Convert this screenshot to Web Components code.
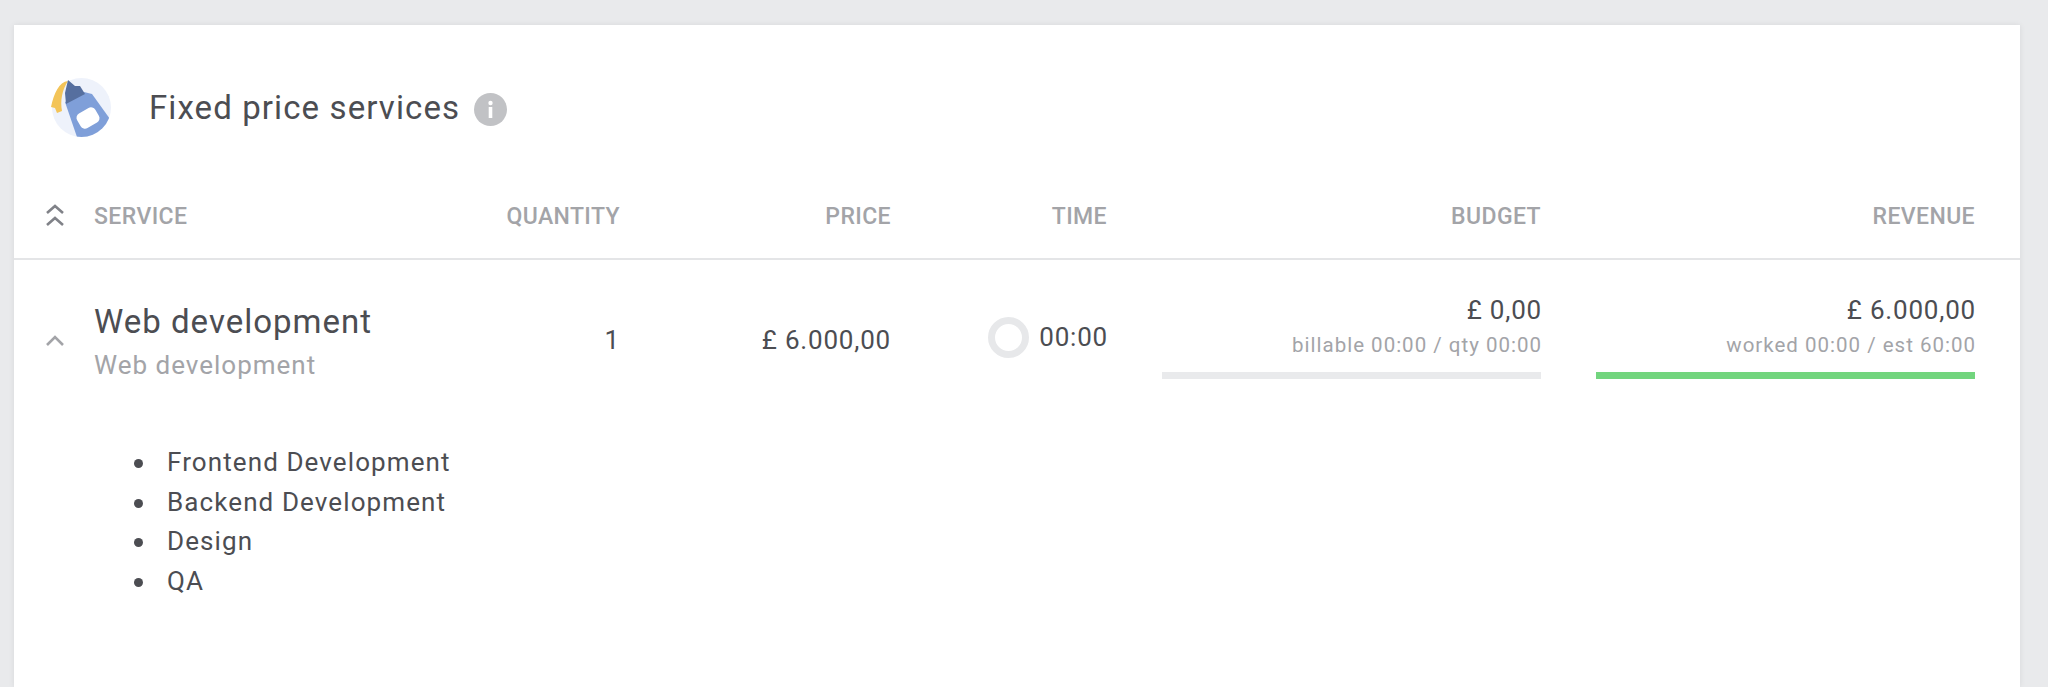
<!DOCTYPE html>
<html lang="en">
<head>
<meta charset="utf-8">
<title>Fixed price services</title>
<style>
	html, body { height: 100%; overflow: hidden; }
	body {
		margin: 0;
		padding: 25px 28px 0 14px;
		box-sizing: border-box;
		background: #e9eaec;
		color: #4c4d52;
		font-family: Roboto, "Liberation Sans", sans-serif;
		--cols: 80px 326px 200px 271px 216px 434px 434px;
	}
</style>
</head>
<body>
<price-card>
	<card-title slot="title">Fixed price services</card-title>
	<table-head></table-head>
	<service-row name="Web development" note="Web development" qty="1" price="£ 6.000,00" time="00:00"
		budget="£ 0,00" budget-note="billable 00:00 / qty 00:00"
		revenue="£ 6.000,00" revenue-note="worked 00:00 / est 60:00"></service-row>
	<service-list>
		<li>Frontend Development</li>
		<li>Backend Development</li>
		<li>Design</li>
		<li>QA</li>
	</service-list>
</price-card>

<script>
"use strict";

(function() {
	class PriceCard extends HTMLElement {
		constructor() {
			super();
			this.attachShadow({mode: "open"}).innerHTML = `
			<style>
				:host {
					display: block;
					height: 662px;
					background: #fff;
					box-shadow: 0 0 6px rgba(0,0,0,.08);
				}
			</style>
			<slot name="title"></slot>
			<slot></slot>`;
		}
	}

	class CardTitle extends HTMLElement {
		constructor() {
			super();
			this.attachShadow({mode: "open"}).innerHTML = `
			<style>
				:host {
					display: flex;
					align-items: center;
					height: 165px;
					padding-left: 34px;
					box-sizing: border-box;
				}
				svg { display: block; }
				.logo { width: 64px; height: 64px; margin-right: 37px; }
				.text { font-size: 33px; letter-spacing: 1.1px; color: #4c4d52; }
				.info { width: 33px; height: 33px; margin-left: 14px; margin-top: 3px; }
			</style>
			<svg class="logo" viewBox="0 0 64 64">
				<defs><clipPath id="round"><circle cx="33.5" cy="31.5" r="29.5"/></clipPath></defs>
				<circle cx="33.5" cy="31.5" r="29.5" fill="#eef2fb"/>
				<path d="M20 5C11 6 6 17 3 31L7 32L9 37L14 35C12 25 14 14 20 5Z" fill="#f3c458"/>
				<g clip-path="url(#round)">
					<path d="M17 26L36 16L44 18L62 43L50 64L30 64Z" fill="#7f9fd9"/>
				</g>
				<path d="M20 4L27 10L32 10L37 18L18 28L17 17Z" fill="#566f9f"/>
				<rect x="29.5" y="33.5" width="21" height="17" rx="5" fill="#fff" transform="rotate(-30 40 42)"/>
			</svg>
			<span class="text"><slot></slot></span>
			<svg class="info" viewBox="0 0 33 33">
				<circle cx="16.5" cy="16.5" r="16.5" fill="#c1c2c5"/>
				<circle cx="16.5" cy="10" r="2.2" fill="#fff"/>
				<rect x="14.7" y="14" width="3.6" height="11" fill="#fff"/>
			</svg>`;
		}
	}

	class TableHead extends HTMLElement {
		constructor() {
			super();
			this.attachShadow({mode: "open"}).innerHTML = `
			<style>
				:host {
					display: grid;
					grid-template-columns: var(--cols);
					align-items: center;
					height: 70px;
					box-sizing: border-box;
					padding-bottom: 15px;
					border-bottom: 2px solid #e4e5e7;
					font-size: 23px;
					font-weight: 500;
					letter-spacing: .4px;
					color: #a3a4a8;
				}
				div { text-align: right; }
				.left { text-align: left; }
				svg { display: block; width: 20px; height: 24px; margin-left: 31px; margin-top: -3px; }
			</style>
			<svg viewBox="0 0 20 24" fill="none" stroke="#808288" stroke-width="2.6">
				<path d="M2 10L10 3L18 10"/>
				<path d="M2 22L10 15L18 22"/>
			</svg>
			<div class="left">SERVICE</div>
			<div>QUANTITY</div>
			<div>PRICE</div>
			<div>TIME</div>
			<div>BUDGET</div>
			<div>REVENUE</div>`;
		}
	}

	class ServiceRow extends HTMLElement {
		constructor() {
			super();
			let a = (name) => this.getAttribute(name);
			this.attachShadow({mode: "open"}).innerHTML = `
			<style>
				:host {
					display: grid;
					grid-template-columns: var(--cols);
					align-items: center;
					height: 160px;
					font-size: 26px;
					letter-spacing: .8px;
				}
				.right { text-align: right; }
				.chev { display: block; width: 20px; height: 13px; margin-left: 31px; margin-top: 1px; }
				.info { margin-top: 6px; }
				.name { font-size: 33px; letter-spacing: 1px; line-height: 44px; }
				.note { font-size: 26px; color: #a3a4a8; line-height: 42px; letter-spacing: 1px; }
				.time { display: flex; justify-content: flex-end; align-items: center; gap: 10px; margin: -6px -1px 0 0; }
				.ring { width: 41px; height: 41px; box-sizing: border-box; border: 7px solid #e7e8ea; border-radius: 50%; }
			</style>
			<svg class="chev" viewBox="0 0 20 13" fill="none" stroke="#a3a4a8" stroke-width="2.6"><path d="M2 11L10 3L18 11"/></svg>
			<div class="info"><div class="name">${a("name")}</div><div class="note">${a("note")}</div></div>
			<div class="right">${a("qty")}</div>
			<div class="right">${a("price")}</div>
			<div class="time"><div class="ring"></div><span>${a("time")}</span></div>
			<money-cell value="${a("budget")}" note="${a("budget-note")}" bar="#e9eaec"></money-cell>
			<money-cell value="${a("revenue")}" note="${a("revenue-note")}" bar="#72d57e"></money-cell>`;
		}
	}

	class MoneyCell extends HTMLElement {
		constructor() {
			super();
			this.attachShadow({mode: "open"}).innerHTML = `
			<style>
				:host { display: block; text-align: right; margin: 0 0 12px 55px; }
				.value { font-size: 26px; line-height: 42px; letter-spacing: .8px; color: #4c4d52; margin-right: -1px; }
				.note { font-size: 20.5px; line-height: 28px; letter-spacing: 1px; color: #a3a4a8; margin-right: -1px; }
				.bar { height: 7px; margin-top: 13px; }
			</style>
			<div class="value">${this.getAttribute("value")}</div>
			<div class="note">${this.getAttribute("note")}</div>
			<div class="bar" style="background:${this.getAttribute("bar")}"></div>`;
		}
	}

	class ServiceList extends HTMLElement {
		constructor() {
			super();
			this.attachShadow({mode: "open"}).innerHTML = `
			<style>
				:host {
					display: block;
					padding: 23px 0 0 153px;
					font-size: 26px;
					line-height: 39.5px;
					letter-spacing: 1.1px;
					color: #4c4d52;
				}
				ul { margin: 0; padding: 0; }
				::slotted(li) { list-style: none; }
				::slotted(li)::before {
					content: "";
					display: inline-block;
					width: 9px;
					height: 9px;
					border-radius: 50%;
					background: #4c4d52;
					margin: 0 24px 0 -33px;
					vertical-align: 3px;
				}
			</style>
			<ul><slot></slot></ul>`;
		}
	}

	customElements.define("price-card", PriceCard);
	customElements.define("card-title", CardTitle);
	customElements.define("table-head", TableHead);
	customElements.define("service-row", ServiceRow);
	customElements.define("money-cell", MoneyCell);
	customElements.define("service-list", ServiceList);
})();
</script>
</body>
</html>
